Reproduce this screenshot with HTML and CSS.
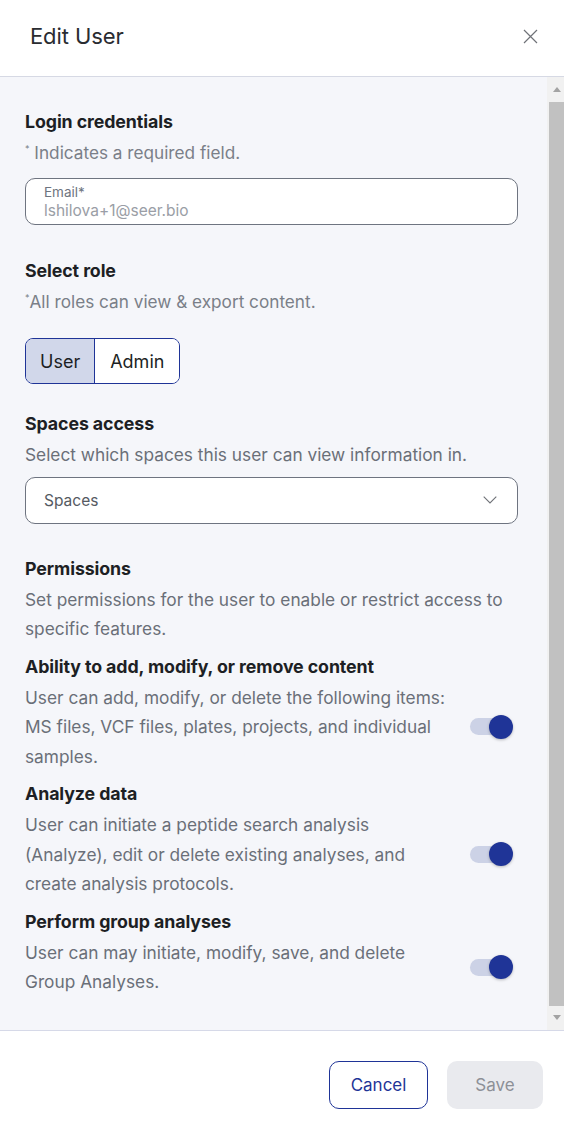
FILE: index.html
```html
<!DOCTYPE html>
<html>
<head>
  <meta charset="UTF-8">
  <title>Edit User</title>
  <link rel="stylesheet" href="styles.css">
</head>
<body>
  <div class="modal">
    <div class="modal-header">
      <h1 class="modal-title">Edit User</h1>
      <button class="close-btn" aria-label="Close">
        <svg width="15" height="15" viewBox="0 0 15 15"><path d="M1 1 L14 14 M14 1 L1 14" stroke="#6f7278" stroke-width="1.2" fill="none"/></svg>
      </button>
    </div>

    <div class="modal-body">
      <div class="content">
        <h2 class="section-title">Login credentials</h2>
        <p class="note"><sup>*</sup> Indicates a required field.</p>

        <div class="field email-field">
          <span class="field-label">Email*</span>
          <span class="field-value">lshilova+1@seer.bio</span>
        </div>

        <h2 class="section-title role-title">Select role</h2>
        <p class="note"><sup>*</sup>All roles can view &amp; export content.</p>

        <div class="segmented">
          <button class="segment active">User</button>
          <button class="segment">Admin</button>
        </div>

        <h2 class="section-title spaces-title">Spaces access</h2>
        <p class="desc">Select which spaces this user can view information in.</p>

        <div class="field select-field">
          <span class="select-text">Spaces</span>
          <svg width="14" height="8" viewBox="0 0 14 8"><path d="M0.7 0.7 L7 7 L13.3 0.7" stroke="#6f7278" stroke-width="1.1" fill="none"/></svg>
        </div>

        <h2 class="section-title perm-title">Permissions</h2>
        <p class="desc">Set permissions for the user to enable or restrict access to specific features.</p>

        <div class="perm">
          <h3 class="section-title">Ability to add, modify, or remove content</h3>
          <div class="perm-row">
            <p class="desc">User can add, modify, or delete the following items: MS files, VCF files, plates, projects, and individual samples.</p>
            <span class="switch"><span class="knob"></span></span>
          </div>
        </div>

        <div class="perm">
          <h3 class="section-title">Analyze data</h3>
          <div class="perm-row">
            <p class="desc">User can initiate a peptide search analysis (Analyze), edit or delete existing analyses, and create analysis protocols.</p>
            <span class="switch"><span class="knob"></span></span>
          </div>
        </div>

        <div class="perm">
          <h3 class="section-title">Perform group analyses</h3>
          <div class="perm-row">
            <p class="desc">User can may initiate, modify, save, and delete Group Analyses.</p>
            <span class="switch"><span class="knob"></span></span>
          </div>
        </div>
      </div>

      <div class="scrollbar">
        <span class="arrow arrow-up"></span>
        <span class="thumb"></span>
        <span class="arrow arrow-down"></span>
      </div>
    </div>

    <div class="modal-footer">
      <button class="btn btn-outline">Cancel</button>
      <button class="btn btn-disabled">Save</button>
    </div>
  </div>
</body>
</html>
```

FILE: styles.css
```css
html, body {
  margin: 0;
  padding: 0;
}

body {
  font-family: Inter, "Noto Sans", sans-serif;
  color: #1d1f24;
  background: #ffffff;
}

.modal {
  display: flex;
  flex-direction: column;
  height: 100vh;
}

.modal-header {
  display: flex;
  align-items: center;
  justify-content: space-between;
  height: 77px;
  padding: 0 26px 4px 30px;
  box-sizing: border-box;
  border-bottom: 1px solid #d6d9e4;
  flex-shrink: 0;
}

.modal-title {
  margin: 0;
  font-size: 22px;
  font-weight: 400;
  color: #2a2c31;
  letter-spacing: -0.1px;
}

.close-btn {
  border: 0;
  background: none;
  padding: 0;
  width: 15px;
  height: 15px;
  cursor: pointer;
}

.modal-body {
  flex: 1;
  display: flex;
  overflow: hidden;
  background: #f5f6fa;
}

.content {
  flex: 1;
  padding: 29px 29px 0 25px;
}

/* fake classic scrollbar */
.scrollbar {
  width: 17px;
  display: flex;
  flex-direction: column;
  align-items: center;
  background: #f1f1f1;
  flex-shrink: 0;
}

.thumb {
  flex: 1;
  width: 15px;
  margin-left: 2px;
  background: #c1c1c1;
}

.arrow {
  display: block;
  width: 0;
  height: 0;
  border-left: 4.5px solid transparent;
  border-right: 4.5px solid transparent;
  margin-left: 2px;
}

.arrow-up {
  border-bottom: 5px solid #a3a3a3;
  margin-top: 10px;
  margin-bottom: 10px;
}

.arrow-down {
  border-top: 5px solid #a3a3a3;
  margin-top: 9px;
  margin-bottom: 10px;
}

.section-title {
  margin: 0;
  font-size: 17.8px;
  font-weight: 700;
  line-height: 32px;
  color: #1d1f24;
  letter-spacing: -0.1px;
}

.note {
  margin: 0;
  font-size: 17.2px;
  line-height: 29px;
  color: #7a7f88;
}

.note sup {
  font-size: 9px;
  vertical-align: 7px;
  line-height: 0;
}

.desc {
  margin: 0;
  font-size: 17.3px;
  line-height: 29.5px;
  color: #6a6f78;
}

.field {
  box-sizing: border-box;
  height: 47px;
  background: #ffffff;
  border: 1px solid #6e7480;
  border-radius: 10px;
}

.email-field {
  margin-top: 11px;
  display: flex;
  flex-direction: column;
  justify-content: center;
  padding: 1px 18px 0;
}

.field-label {
  font-size: 13.5px;
  line-height: 17px;
  color: #6e7480;
}

.field-value {
  font-size: 15.5px;
  line-height: 20px;
  color: #9a9ea6;
}

.role-title {
  margin-top: 30px;
}

.segmented {
  display: inline-flex;
  margin-top: 22px;
  height: 46px;
  border: 1px solid #1f3497;
  border-radius: 8px;
  overflow: hidden;
  box-sizing: border-box;
}

.segment {
  border: 0;
  margin: 0;
  padding: 0 15px;
  font-family: inherit;
  font-size: 18px;
  color: #1d1f24;
  background: #ffffff;
}

.segment.active {
  background: #d1d7ea;
  border-right: 1px solid #1f3497;
  padding: 0 14px;
}

.spaces-title {
  margin-top: 24px;
}

.select-field {
  margin-top: 7px;
  display: flex;
  align-items: center;
  justify-content: space-between;
  padding: 0 20px 0 18px;
}

.select-text {
  font-size: 15.5px;
  color: #555a62;
}

.perm-title {
  margin-top: 29px;
}

.perm {
  margin-top: 7px;
}

.perm-row {
  display: flex;
  align-items: center;
  justify-content: space-between;
}

.perm-row .desc {
  width: 427px;
}

.switch {
  position: relative;
  flex-shrink: 0;
  width: 37px;
  height: 17px;
  margin-right: 11px;
  border-radius: 9px;
  background: #ccd2e6;
}

.knob {
  position: absolute;
  top: -3.5px;
  right: -6px;
  width: 24px;
  height: 24px;
  border-radius: 50%;
  background: #1f3497;
  box-shadow: 0 1px 3px rgba(0, 0, 0, 0.25);
}

.modal-footer {
  display: flex;
  justify-content: flex-end;
  gap: 19px;
  height: 103px;
  padding: 30px 21px 0 0;
  box-sizing: border-box;
  border-top: 1px solid #d6d9e8;
  flex-shrink: 0;
}

.btn {
  height: 48px;
  border-radius: 10px;
  font-family: inherit;
  font-size: 17px;
  cursor: pointer;
}

.btn-outline {
  width: 99px;
  background: #ffffff;
  border: 1px solid #1f3497;
  color: #1f3497;
}

.btn-disabled {
  width: 96px;
  background: #e9eaee;
  border: 0;
  color: #8d9097;
}
```
